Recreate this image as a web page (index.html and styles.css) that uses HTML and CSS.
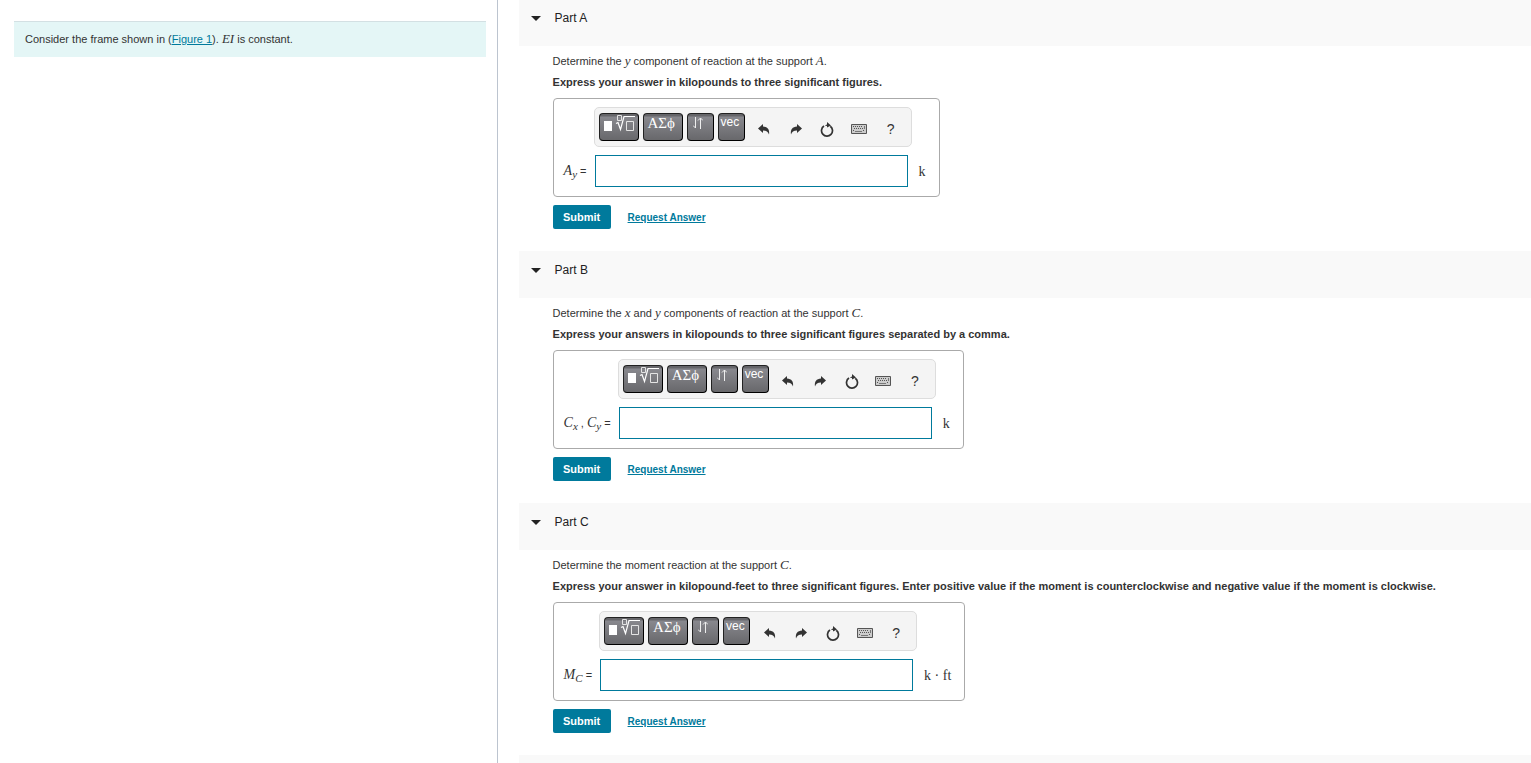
FILE: index.html
```html
<!DOCTYPE html>
<html lang="en">
<head>
  <meta charset="UTF-8">
  <meta name="viewport" content="width=device-width,initial-scale=1.0">
  <title>Frame reactions</title>
  <link rel="stylesheet" href="styles.css">
</head>
<body>

<!-- shared toolbar icons -->
<svg class="sprite" aria-hidden="true">
  <symbol id="i-template" viewBox="0 0 32 18">
    <path d="M0 7h8v10H0z" fill="#fff"/>
    <path d="M13.500 1.500h4v5h-4zM22.500 7.500h7v9h-7z" fill="none" stroke="#e4e4e4"/>
    <path d="M12 9.500l2-1 2.500 7L20 2.500h11" fill="none" stroke="#fff" stroke-width="1.200"/>
  </symbol>
  <symbol id="i-arrows" viewBox="0 0 10 12">
    <path d="M2.500 0v11M0 8.500l2.500 2.500M7.500 12V1M5 3.500l2.500-2.500L10 3.500" fill="none" stroke="#eee"/>
  </symbol>
  <symbol id="i-undo" viewBox="0 0 12 11">
    <path d="M5 0v2.500c4.500.3 6.800 3 6 8-.9-2.600-2.500-4-6-4V9L0 4.500z" fill="#333"/>
  </symbol>
  <symbol id="i-redo" viewBox="0 0 12 11">
    <path d="M7 0v2.500c-4.500.3-6.800 3-6 8 .9-2.600 2.500-4 6-4V9l5-4.500z" fill="#333"/>
  </symbol>
  <symbol id="i-reset" viewBox="0 0 14 15">
    <path d="M10.300 4.200A5.500 5.500 0 1 1 4 4" fill="none" stroke="#333" stroke-width="1.700"/>
    <path d="M4.800 3.500L7 2.600V0l4 3.400-4 2.200V4z" fill="#333"/>
  </symbol>
  <symbol id="i-keys" viewBox="0 0 16 10">
    <path d="M.5.5h15v9H.5z" fill="#ccc" stroke="#555"/>
    <path d="M2 2.500h10M3 4.500h9M2 6.500h2M12 6.500h2" fill="none" stroke="#555" stroke-dasharray="1 1"/>
    <path d="M4 7.500h7M13.500 2v3" fill="none" stroke="#777"/>
  </symbol>
</svg>

<div class="layout">

  <aside class="intro">
    <p class="problem">Consider the frame shown in (<a href="#figure1">Figure 1</a>). <i class="math">EI</i> is constant.</p>
  </aside>

  <main class="parts">

    <!-- Part A -->
    <section class="part">
      <h2>Part A</h2>
      <div class="part-body">
        <p>Determine the <i class="math">y</i> component of reaction at the support <i class="math">A</i>.</p>
        <p class="instructions">Express your answer in kilopounds to three significant figures.</p>
        <div class="answer">
          <div class="toolbar">
            <button class="key wide" aria-label="Templates"><svg width="32" height="18"><use href="#i-template"/></svg></button>
            <button class="key wide greek">ΑΣϕ</button>
            <button class="key arrows" aria-label="Arrows"><svg width="10" height="12"><use href="#i-arrows"/></svg></button>
            <button class="key">vec</button>
            <div class="tools">
              <button aria-label="Undo"><svg width="12" height="11"><use href="#i-undo"/></svg></button>
              <button aria-label="Redo"><svg width="12" height="11"><use href="#i-redo"/></svg></button>
              <button aria-label="Reset"><svg width="14" height="15"><use href="#i-reset"/></svg></button>
              <button aria-label="Keyboard shortcuts"><svg width="16" height="10"><use href="#i-keys"/></svg></button>
              <button aria-label="Help">?</button>
            </div>
          </div>
          <label for="ansA"><i class="math">A<sub>y</sub></i> =</label>
          <input id="ansA" type="text">
          <span class="unit">k</span>
        </div>
        <div class="actions">
          <button class="submit">Submit</button>
          <a href="#answerA">Request Answer</a>
        </div>
      </div>
    </section>

    <!-- Part B -->
    <section class="part">
      <h2>Part B</h2>
      <div class="part-body">
        <p>Determine the <i class="math">x</i> and <i class="math">y</i> components of reaction at the support <i class="math">C</i>.</p>
        <p class="instructions">Express your answers in kilopounds to three significant figures separated by a comma.</p>
        <div class="answer">
          <div class="toolbar">
            <button class="key wide" aria-label="Templates"><svg width="32" height="18"><use href="#i-template"/></svg></button>
            <button class="key wide greek">ΑΣϕ</button>
            <button class="key arrows" aria-label="Arrows"><svg width="10" height="12"><use href="#i-arrows"/></svg></button>
            <button class="key">vec</button>
            <div class="tools">
              <button aria-label="Undo"><svg width="12" height="11"><use href="#i-undo"/></svg></button>
              <button aria-label="Redo"><svg width="12" height="11"><use href="#i-redo"/></svg></button>
              <button aria-label="Reset"><svg width="14" height="15"><use href="#i-reset"/></svg></button>
              <button aria-label="Keyboard shortcuts"><svg width="16" height="10"><use href="#i-keys"/></svg></button>
              <button aria-label="Help">?</button>
            </div>
          </div>
          <label for="ansB"><i class="math">C<sub>x</sub></i> , <i class="math">C<sub>y</sub></i> =</label>
          <input id="ansB" type="text">
          <span class="unit">k</span>
        </div>
        <div class="actions">
          <button class="submit">Submit</button>
          <a href="#answerB">Request Answer</a>
        </div>
      </div>
    </section>

    <!-- Part C -->
    <section class="part">
      <h2>Part C</h2>
      <div class="part-body">
        <p>Determine the moment reaction at the support <i class="math">C</i>.</p>
        <p class="instructions">Express your answer in kilopound-feet to three significant figures. Enter positive value if the moment is counterclockwise and negative value if the moment is clockwise.</p>
        <div class="answer">
          <div class="toolbar">
            <button class="key wide" aria-label="Templates"><svg width="32" height="18"><use href="#i-template"/></svg></button>
            <button class="key wide greek">ΑΣϕ</button>
            <button class="key arrows" aria-label="Arrows"><svg width="10" height="12"><use href="#i-arrows"/></svg></button>
            <button class="key">vec</button>
            <div class="tools">
              <button aria-label="Undo"><svg width="12" height="11"><use href="#i-undo"/></svg></button>
              <button aria-label="Redo"><svg width="12" height="11"><use href="#i-redo"/></svg></button>
              <button aria-label="Reset"><svg width="14" height="15"><use href="#i-reset"/></svg></button>
              <button aria-label="Keyboard shortcuts"><svg width="16" height="10"><use href="#i-keys"/></svg></button>
              <button aria-label="Help">?</button>
            </div>
          </div>
          <label for="ansC"><i class="math">M<sub>C</sub></i> =</label>
          <input id="ansC" type="text">
          <span class="unit">k · ft</span>
        </div>
        <div class="actions">
          <button class="submit">Submit</button>
          <a href="#answerC">Request Answer</a>
        </div>
      </div>
    </section>

    <!-- next part starts below the fold -->
    <section class="part next"></section>

  </main>
</div>

</body>
</html>
```
FILE: styles.css
```css
:root{
  --c-text:#333; --c-link:#007a9c; --c-head:#f9f9f9;
  --c-intro:#e4f6f6; --c-line:#bcc4cf; --c-box:#aaa;
}
*{box-sizing:border-box}
body{
  margin:0;background:#fff;color:var(--c-text);
  font:11px/21px "Liberation Sans",Arial,sans-serif
}
button,input{font:inherit;margin:0}
a{color:var(--c-link)}
p{margin:0}
.sprite{display:none}

.layout{
  display:grid;grid-template-columns:13fr 27fr;
  height:100vh;overflow:hidden
}
.intro{border-right:1px solid var(--c-line);padding:21px 11px 0 14px}
.problem{
  background:var(--c-intro);border-top:1px solid #d3e0e3;
  padding:7px 11px
}
.math{font:italic 13px/1 "Liberation Serif",serif}
label .math{font-size:14px}
.math sub{font-size:11px;line-height:1;vertical-align:-3px}

/* parts */
.parts{padding-left:21px;margin-top:-1px}
.part h2{
  display:flex;align-items:center;height:47px;margin:0;
  padding:0 12px 9px;gap:14px;
  background:var(--c-head);font-size:12px;font-weight:400;color:#222
}
.part h2::before{
  content:"";border:5px solid transparent;
  border-top-color:#222;border-bottom:0
}
.part-body{padding:5px 0 22px 34px}
.instructions{font-weight:700}
.next{height:47px;background:var(--c-head)}

/* answer box */
.answer{
  display:grid;grid-template-columns:auto 318px auto;
  gap:8px 7px;align-items:center;width:fit-content;
  margin:5px 0 8px;padding:8px 13px 9px 10px;
  border:1px solid var(--c-box);border-radius:4px
}
.answer label{grid-column:1;white-space:nowrap}
.answer input{
  width:313px;height:32px;margin-left:1px;padding:0 6px;
  border:1px solid var(--c-link);background:#fff;outline:0
}
.unit{font:14px/21px "Liberation Serif",serif}
.toolbar{
  grid-column:2;display:flex;align-items:center;gap:4px;height:40px;
  padding:0 4px;background:#f4f4f4;border:1px solid #ddd;border-radius:5px
}
.key{
  display:flex;align-items:flex-start;
  width:27px;height:28px;padding:1px 0 0 2px;
  background:linear-gradient(#66666a 0,#66666a 2px,#88888e 3px,#68686b 100%);
  border:1px solid #222;border-right-color:#000;border-bottom-color:#000;
  border-radius:4px;color:#fff;font-size:12px;line-height:14px
}
.key.wide{width:40px;padding:0 0 0 4px}
.key.arrows{padding:3px 0 0 5px}
.greek{font:15px/19px "Liberation Serif",serif}
.tools{flex:1;display:grid;grid-template-columns:repeat(5,1fr)}
.tools button{
  display:flex;justify-content:center;align-items:center;
  height:24px;padding:4px 0 0;border:0;background:none;
  color:#333;font-size:14px;line-height:20px
}

/* submit row */
.actions{display:flex;align-items:center;gap:17px;height:24px}
.submit{
  width:58px;height:24px;padding:0;border:0;border-radius:2px;
  background:var(--c-link);color:#fff;font-weight:700
}
.actions a{font-size:10px;font-weight:700}
```
